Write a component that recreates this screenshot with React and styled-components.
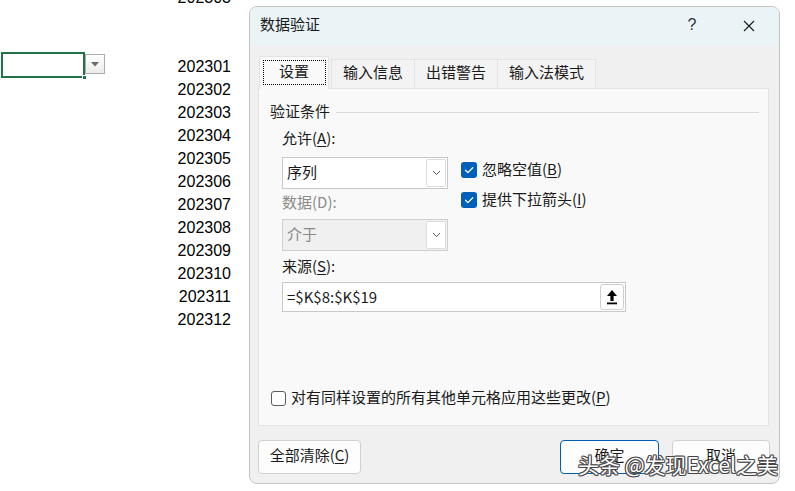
import React from "react";
import styled, { createGlobalStyle, css } from "styled-components";

const GlobalStyle = createGlobalStyle`
  html, body {
    margin: 0;
    padding: 0;
    background: #ffffff;
  }
  * {
    box-sizing: border-box;
  }
`;

const cjk = `"Noto Sans CJK SC", "Noto Sans", sans-serif`;

const Screen = styled.div`
  position: relative;
  width: 795px;
  height: 491px;
  overflow: hidden;
  display: flex;
  background: #ffffff;
  font-family: ${cjk};
`;

/* ---------- spreadsheet behind the dialog ---------- */

const Sheet = styled.div`
  width: 249px;
  display: flex;
  justify-content: space-between;
  padding-right: 18px;
`;

const CellColumn = styled.div`
  padding-top: 52px;
  display: flex;
  align-items: flex-start;
`;

const ActiveCell = styled.div`
  position: relative;
  width: 84px;
  height: 26px;
  margin-left: 1px;
  border: 2px solid #217346;
`;

const FillHandle = styled.span`
  position: absolute;
  right: -4px;
  bottom: -4px;
  width: 5px;
  height: 5px;
  background: #217346;
  border: 1px solid #ffffff;
`;

const DropButton = styled.div`
  width: 20px;
  height: 20px;
  margin-top: 2px;
  border: 1px solid #acacac;
  background: linear-gradient(#ffffff, #ececec);
  display: flex;
  align-items: center;
  justify-content: center;
`;

const NumberColumn = styled.div`
  margin-top: -14px;
  display: flex;
  flex-direction: column;
  align-items: flex-end;
  font-family: "Liberation Sans", Arial, sans-serif;
  font-size: 16px;
  color: #000000;
`;

const NumberRow = styled.div`
  height: 23px;
  line-height: 23px;
`;

/* ---------- dialog ---------- */

const Dialog = styled.div`
  margin-top: 6px;
  width: 531px;
  height: 478px;
  border: 1px solid #c4c4c4;
  border-radius: 8px;
  overflow: hidden;
  background: #f0f0f0;
  display: flex;
  flex-direction: column;
  color: #1a1a1a;
  font-size: 15px;
`;

const TitleBar = styled.div`
  height: 38px;
  flex: 0 0 38px;
  background: #eaf4f7;
  display: flex;
  align-items: center;
  padding: 0 24px 0 10px;
`;

const Title = styled.div`
  flex: 1;
  line-height: 20px;
  margin-bottom: 5px;
  color: #1a1a1a;
`;

const HelpMark = styled.span`
  width: 12px;
  text-align: center;
  font-family: "Liberation Sans", sans-serif;
  font-size: 16px;
  color: #333333;
  margin-right: 45px;
  margin-bottom: 2px;
`;

const Body = styled.div`
  flex: 1;
  display: flex;
  flex-direction: column;
  padding: 11px 10px 0 8px;
`;

const TabRow = styled.div`
  display: flex;
  align-items: flex-end;
  padding-left: 1px;
  position: relative;
  z-index: 1;
`;

const Tab = styled.div`
  position: relative;
  height: 29px;
  padding: 0 11px;
  line-height: 24px;
  background: #f3f3f3;
  border: 1px solid #e3e3e3;
  border-bottom: none;
  margin-right: -1px;
  color: #1a1a1a;
  white-space: nowrap;

  ${(p) =>
    p.active &&
    css`
      height: 33px;
      padding: 0 19px;
      line-height: 27px;
      background: #f9f9f9;
      margin-right: 2px;
      margin-bottom: -1px;

      &::after {
        content: "";
        position: absolute;
        top: 3px;
        left: 3px;
        right: 2px;
        bottom: 4px;
        border: 1px dotted #000000;
      }
    `}
`;

const Panel = styled.div`
  height: 338px;
  flex: 0 0 338px;
  background: #f9f9f9;
  border: 1px solid #e3e3e3;
  display: flex;
  flex-direction: column;
  padding: 12px 9px 19px 11px;
`;

const GroupHeader = styled.div`
  display: flex;
  align-items: center;
  line-height: 20px;
`;

const GroupRule = styled.div`
  flex: 1;
  height: 1px;
  margin: 2px 0 0 6px;
  background: #dadada;
`;

const Form = styled.div`
  display: flex;
  margin: 7px 0 0 12px;
`;

const FieldColumn = styled.div`
  display: flex;
  flex-direction: column;
  width: 166px;
`;

const FieldLabel = styled.div`
  line-height: 20px;
  color: ${(p) => (p.disabled ? "#8a8a8a" : "#1a1a1a")};
  margin-top: ${(p) => p.gap || 0}px;
`;

const Underline = styled.span`
  text-decoration: underline;
  text-underline-offset: 2px;
`;

const Select = styled.div`
  margin-top: ${(p) => p.gap || 0}px;
  height: 32px;
  display: flex;
  border: 1px solid ${(p) => (p.disabled ? "#cfcfcf" : "#c8c8c8")};
  background: ${(p) => (p.disabled ? "#f0f0f0" : "#ffffff")};
  color: ${(p) => (p.disabled ? "#8a8a8a" : "#1a1a1a")};
`;

const SelectValue = styled.div`
  flex: 1;
  padding-left: 4px;
  line-height: 28px;
`;

const SelectArrow = styled.div`
  width: 20px;
  margin: 1px 1px 1px 0;
  border: 1px solid #dcdcdc;
  border-radius: 2px;
  background: #ffffff;
  display: flex;
  align-items: center;
  justify-content: center;
`;

const CheckColumn = styled.div`
  display: flex;
  flex-direction: column;
  margin: 34px 0 0 13px;
  gap: 14px;
`;

const CheckRow = styled.label`
  display: flex;
  align-items: center;
  gap: 5px;
  height: 16px;
`;

const CheckText = styled.span`
  line-height: 20px;
  margin-top: -3px;
  white-space: nowrap;
`;

const CheckBox = styled.span`
  width: 16px;
  height: 16px;
  flex: 0 0 16px;
  border-radius: 3px;
  display: flex;
  align-items: center;
  justify-content: center;
  ${(p) =>
    p.checked
      ? css`
          background: #005fb8;
        `
      : css`
          width: 15px;
          height: 15px;
          flex-basis: 15px;
          border: 1px solid #5c5c5c;
          background: #ffffff;
        `}
`;

const SourceInput = styled.div`
  margin: 6px 0 0 12px;
  width: 344px;
  height: 30px;
  border: 1px solid #c8c8c8;
  background: #ffffff;
  display: flex;
  align-items: center;
`;

const SourceText = styled.div`
  flex: 1;
  padding-left: 4px;
  line-height: 24px;
`;

const CollapseButton = styled.div`
  width: 24px;
  height: 26px;
  margin-right: 1px;
  border: 1px solid #cfcfcf;
  border-radius: 3px;
  background: #ffffff;
  display: flex;
  align-items: center;
  justify-content: center;
`;

const ApplyRow = styled.label`
  margin-top: auto;
  display: flex;
  align-items: center;
  gap: 5px;
  height: 16px;
  padding-left: 1px;
`;

const Footer = styled.div`
  display: flex;
  justify-content: space-between;
  margin-top: 14px;
`;

const ButtonGroup = styled.div`
  display: flex;
  gap: 13px;
  margin-right: -1px;
`;

const Button = styled.button`
  font-family: ${cjk};
  font-size: 15px;
  color: #1a1a1a;
  height: 34px;
  width: ${(p) => p.w}px;
  padding: 0 0 4px;
  border-radius: 4px;
  border: 1px solid ${(p) => (p.primary ? "#005fb8" : "#d0d0d0")};
  background: #fdfdfd;
  line-height: 20px;
`;

const Watermark = styled.div`
  position: absolute;
  left: 578px;
  top: 451px;
  font-size: 21px;
  line-height: 26px;
  color: #ffffff;
  white-space: nowrap;
  text-shadow: -1px 0 #444, 1px 0 #444, 0 -1px #444, 0 1px #444,
    -1px -1px #666, 1px 1px #666, -1px 1px #666, 1px -1px #666;
`;

const Chevron = () => (
  <svg width="9" height="6" viewBox="0 0 9 6" aria-hidden="true">
    <path d="M1 1l3.5 3.5L8 1" fill="none" stroke="#5a5a5a" strokeWidth="1" />
  </svg>
);

const Tick = () => (
  <svg width="12" height="12" viewBox="0 0 12 12" aria-hidden="true">
    <path
      d="M2.5 6.2l2.4 2.4 4.8-4.9"
      fill="none"
      stroke="#ffffff"
      strokeWidth="1.3"
      strokeLinecap="round"
      strokeLinejoin="round"
    />
  </svg>
);

const CloseIcon = () => (
  <svg width="12" height="12" viewBox="0 0 12 12" aria-hidden="true">
    <path d="M1 1l10 10M11 1L1 11" stroke="#1a1a1a" strokeWidth="1.1" />
  </svg>
);

const UploadIcon = () => (
  <svg width="10" height="15" viewBox="0 0 10 15" aria-hidden="true">
    <path d="M5 0L10 6H6.6V11H3.4V6H0z" fill="#000" />
    <rect x="0" y="12.5" width="10" height="1.8" fill="#000" />
  </svg>
);

const SmallTriangle = () => (
  <svg width="8" height="5" viewBox="0 0 8 5" aria-hidden="true">
    <path d="M0 0h8L4 4.5z" fill="#6b6b6b" />
  </svg>
);

const numbers = [
  "202303",
  "",
  "",
  "202301",
  "202302",
  "202303",
  "202304",
  "202305",
  "202306",
  "202307",
  "202308",
  "202309",
  "202310",
  "202311",
  "202312",
];

const tabs = ["设置", "输入信息", "出错警告", "输入法模式"];

export default function App() {
  return (
    <Screen>
      <GlobalStyle />
      <Sheet>
        <CellColumn>
          <ActiveCell>
            <FillHandle />
          </ActiveCell>
          <DropButton>
            <SmallTriangle />
          </DropButton>
        </CellColumn>
        <NumberColumn>
          {numbers.map((n, i) => (
            <NumberRow key={i}>{n}</NumberRow>
          ))}
        </NumberColumn>
      </Sheet>

      <Dialog>
        <TitleBar>
          <Title>数据验证</Title>
          <HelpMark>?</HelpMark>
          <CloseIcon />
        </TitleBar>
        <Body>
          <TabRow>
            {tabs.map((t, i) => (
              <Tab key={t} active={i === 0}>
                {t}
              </Tab>
            ))}
          </TabRow>
          <Panel>
            <GroupHeader>
              验证条件
              <GroupRule />
            </GroupHeader>
            <Form>
              <FieldColumn>
                <FieldLabel>
                  允许(<Underline>A</Underline>):
                </FieldLabel>
                <Select gap={9}>
                  <SelectValue>序列</SelectValue>
                  <SelectArrow>
                    <Chevron />
                  </SelectArrow>
                </Select>
                <FieldLabel disabled gap={3}>
                  数据(D):
                </FieldLabel>
                <Select disabled gap={7}>
                  <SelectValue>介于</SelectValue>
                  <SelectArrow>
                    <Chevron />
                  </SelectArrow>
                </Select>
                <FieldLabel gap={5}>
                  来源(<Underline>S</Underline>):
                </FieldLabel>
              </FieldColumn>
              <CheckColumn>
                <CheckRow>
                  <CheckBox checked>
                    <Tick />
                  </CheckBox>
                  <CheckText>
                    忽略空值(<Underline>B</Underline>)
                  </CheckText>
                </CheckRow>
                <CheckRow>
                  <CheckBox checked>
                    <Tick />
                  </CheckBox>
                  <CheckText>
                    提供下拉箭头(<Underline>I</Underline>)
                  </CheckText>
                </CheckRow>
              </CheckColumn>
            </Form>
            <SourceInput>
              <SourceText>=$K$8:$K$19</SourceText>
              <CollapseButton>
                <UploadIcon />
              </CollapseButton>
            </SourceInput>
            <ApplyRow>
              <CheckBox />
              <CheckText>
                对有同样设置的所有其他单元格应用这些更改(<Underline>P</Underline>)
              </CheckText>
            </ApplyRow>
          </Panel>
          <Footer>
            <Button w={103}>
              全部清除(<Underline>C</Underline>)
            </Button>
            <ButtonGroup>
              <Button primary w={99}>
                确定
              </Button>
              <Button w={98}>取消</Button>
            </ButtonGroup>
          </Footer>
        </Body>
      </Dialog>

      <Watermark>头条 @发现Excel之美</Watermark>
    </Screen>
  );
}
